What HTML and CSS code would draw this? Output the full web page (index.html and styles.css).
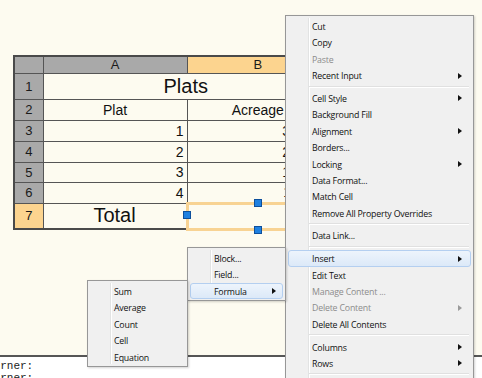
FILE: index.html
```html
<!DOCTYPE html>
<html>
<head>
<meta charset="utf-8">
<link rel="stylesheet" href="styles.css">
</head>
<body>
<div class="canvas">
  <table class="sheet">
    <colgroup><col class="c-h"><col class="c-a"><col class="c-b"></colgroup>
    <tr class="r-head"><th class="corner"></th><th>A</th><th class="hot">B</th></tr>
    <tr class="r-1"><th>1</th><td colspan="2" class="title">Plats</td></tr>
    <tr class="r-2"><th>2</th><td class="mid">Plat</td><td class="mid">Acreage</td></tr>
    <tr class="r-3"><th>3</th><td class="num">1</td><td class="num">35.125</td></tr>
    <tr class="r-4"><th>4</th><td class="num">2</td><td class="num">22.750</td></tr>
    <tr class="r-5"><th>5</th><td class="num">3</td><td class="num">17.500</td></tr>
    <tr class="r-6"><th>6</th><td class="num">4</td><td class="num">11.250</td></tr>
    <tr class="r-7"><th class="hot">7</th><td class="title">Total</td><td class="selected"><span class="grip g-left"></span><span class="grip g-top"></span><span class="grip g-bottom"></span></td></tr>
  </table>
</div>
<div class="rule"></div>
<div class="console">
  <div class="line">Corner:</div>
  <div class="line">Corner:</div>
</div>

<div class="menu main-menu">
  <div class="item">Cut</div>
  <div class="item">Copy</div>
  <div class="item disabled">Paste</div>
  <div class="item sub">Recent Input</div>
  <div class="sep"></div>
  <div class="item sub">Cell Style</div>
  <div class="item">Background Fill</div>
  <div class="item sub">Alignment</div>
  <div class="item">Borders...</div>
  <div class="item sub">Locking</div>
  <div class="item">Data Format...</div>
  <div class="item">Match Cell</div>
  <div class="item">Remove All Property Overrides</div>
  <div class="sep"></div>
  <div class="item">Data Link...</div>
  <div class="sep"></div>
  <div class="item sub active">Insert</div>
  <div class="item">Edit Text</div>
  <div class="item disabled">Manage Content ...</div>
  <div class="item sub disabled">Delete Content</div>
  <div class="item">Delete All Contents</div>
  <div class="sep"></div>
  <div class="item sub">Columns</div>
  <div class="item sub">Rows</div>
  <div class="sep"></div>
</div>

<div class="menu insert-menu">
  <div class="item">Block...</div>
  <div class="item">Field...</div>
  <div class="item sub active">Formula</div>
</div>

<div class="menu formula-menu">
  <div class="item">Sum</div>
  <div class="item">Average</div>
  <div class="item">Count</div>
  <div class="item">Cell</div>
  <div class="item">Equation</div>
</div>
</body>
</html>
```

FILE: styles.css
```css
html, body {
  margin: 0;
  padding: 0;
  background: #ffffff;
  overflow: hidden;
}
body {
  width: 482px;
  height: 378px;
  position: relative;
}
.canvas {
  height: 355px;
  background: #fdfbf0;
  padding: 55px 0 0 13px;
  box-sizing: border-box;
}
.sheet {
  border-collapse: collapse;
  table-layout: fixed;
  width: 315px;
  font-family: "Liberation Sans", Arial, sans-serif;
  color: #111;
  border: 2px solid #4a4a4a;
}
.c-h { width: 29px; }
.c-a { width: 144px; }
.c-b { width: 142px; }
.sheet th, .sheet td {
  border: 1px solid #555;
  padding: 0;
  overflow: hidden;
  white-space: nowrap;
}
.sheet th {
  background: #a9a9a9;
  font-weight: normal;
  font-size: 13px;
  text-align: center;
  color: #1a1a1a;
}
.sheet th.hot {
  background: #fcd48f;
}
.r-head { height: 17px; }
.r-1 { height: 26px; }
.r-2, .r-3, .r-4, .r-6 { height: 21px; }
.r-5 { height: 20px; }
.r-7 { height: 26px; }
.title {
  font-size: 20px;
  text-align: center;
}
.mid {
  font-size: 14px;
  text-align: center;
}
.num {
  font-size: 14px;
  text-align: right;
  padding-right: 3px !important;
}
.sheet td.selected {
  border: 3px solid #f8d393;
  position: relative;
  overflow: visible;
}
.grip {
  position: absolute;
  width: 6px;
  height: 6px;
  background: #1f80e0;
  border: 1px solid #0d4f9c;
  z-index: 1;
}
.g-left { left: -6px; top: 6px; }
.g-top { left: 65px; top: -6px; }
.g-bottom { left: 65px; bottom: -6px; }
.rule {
  height: 2px;
  background: #565656;
}
.console {
  background: #fff;
  font-family: "Liberation Mono", "Courier New", monospace;
  font-size: 11px;
  line-height: 12px;
  padding-top: 3px;
  color: #222;
  text-indent: -13px;
}
.menu {
  position: absolute;
  background: #f0f0f0;
  border: 1px solid #979797;
  box-sizing: border-box;
  padding: 2px 2px;
  font-family: "Open Sans", "Noto Sans", sans-serif;
  font-size: 8.8px;
  letter-spacing: -0.2px;
  color: #111;
  box-shadow: 1px 1px 2px rgba(0,0,0,0.18);
  z-index: 2;
}
.menu::before {
  content: "";
  position: absolute;
  left: 22px;
  top: 2px;
  bottom: 2px;
  width: 1px;
  background: #e2e3e3;
  border-right: 1px solid #ffffff;
}
.main-menu {
  left: 285px;
  top: 15px;
  width: 189px;
  height: 380px;
}
.insert-menu {
  left: 187px;
  top: 247px;
  width: 99px;
  height: 54px;
}
.formula-menu {
  left: 87px;
  top: 280px;
  width: 101px;
  height: 87px;
}
.item {
  position: relative;
  height: 16.4px;
  line-height: 16.4px;
  padding-left: 23px;
  box-sizing: border-box;
  border: 1px solid transparent;
  border-radius: 3px;
  white-space: nowrap;
}
.item.disabled {
  color: #8c8c8c;
}
.item.active {
  background: linear-gradient(#edf4fc, #dce9f8);
  border-color: #b4cff0;
}
.item.sub::after {
  content: "";
  position: absolute;
  right: 8px;
  top: 4.5px;
  border-left: 4px solid #111;
  border-top: 3.5px solid transparent;
  border-bottom: 3.5px solid transparent;
}
.item.sub.disabled::after {
  border-left-color: #9a9a9a;
}
.insert-menu .item.sub::after {
  right: 6px;
}
.sep {
  position: relative;
  height: 6.4px;
}
.sep::before {
  content: "";
  position: absolute;
  left: 21px;
  right: 2px;
  top: 2px;
  height: 1px;
  background: #e0e0e0;
  border-bottom: 1px solid #ffffff;
}
```
